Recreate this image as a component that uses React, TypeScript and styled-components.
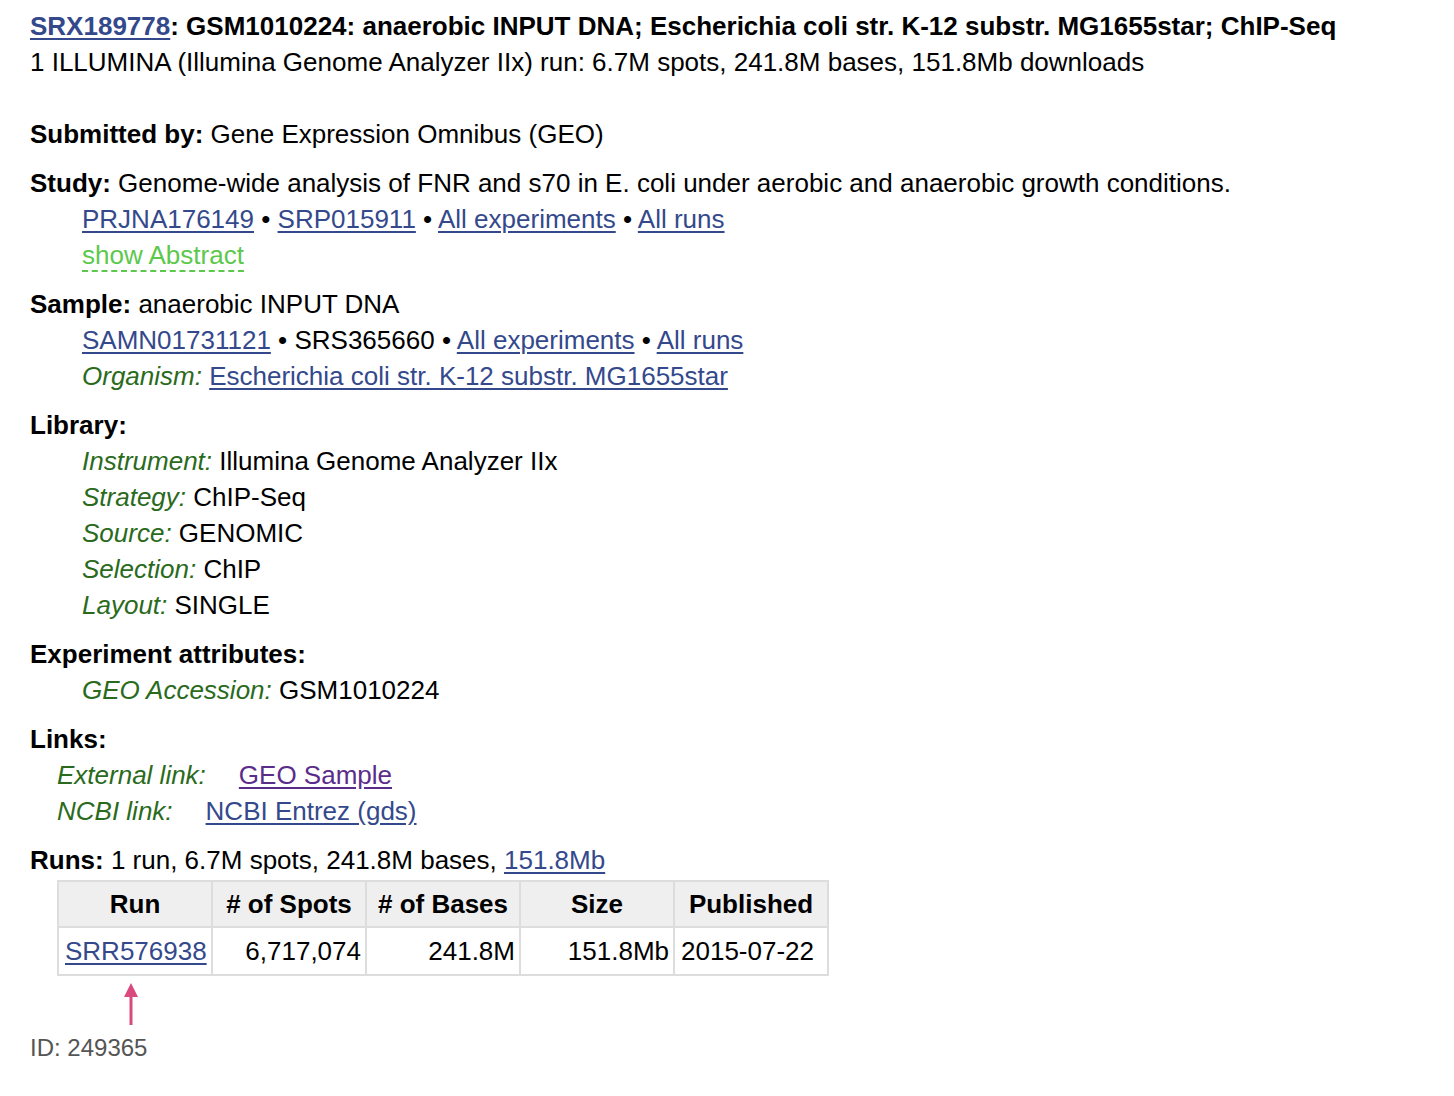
import styled, { createGlobalStyle } from 'styled-components';

const GlobalStyle = createGlobalStyle`
	body {
		margin: 0;
		background: #fff;
		color: #000;
		font-family: "Liberation Sans", Arial, Helvetica, sans-serif;
		font-size: 26px;
		line-height: 36px;
	}
`;

const Page = styled.div`
	padding: 8px 30px 30px 30px;
`;

const Title = styled.div`
	font-weight: bold;
`;

const Summary = styled.div`
	margin-bottom: 36px;
`;

const Block = styled.div`
	margin-bottom: 13px;
`;

const Label = styled.b``;

const Indent = styled.div<{ $pad?: number }>`
	padding-left: ${(p) => p.$pad ?? 52}px;
`;

const Link = styled.a<{ $visited?: boolean }>`
	color: ${(p) => (p.$visited ? '#5b2d8b' : '#34498c')};
	text-decoration: underline;
	text-underline-offset: 3px;
	cursor: pointer;
`;

const Toggle = styled.span`
	color: #5cc84c;
	border-bottom: 2px dashed #5cc84c;
	cursor: pointer;
`;

const Field = styled.i`
	color: #2a6a1c;
`;

const LinkLabel = styled(Field)`
	margin-right: 33px;
`;

const RunTable = styled.table`
	border-collapse: collapse;
	margin-left: 27px;
	margin-top: 2px;
	table-layout: fixed;
	border: 2px solid #ddd;
`;

const HeadCell = styled.th`
	width: 144px;
	height: 44px;
	padding: 0 4px;
	background: #efefef;
	border: 2px solid #ddd;
	font-weight: bold;
	text-align: center;
	white-space: nowrap;
`;

const Cell = styled.td<{ $align?: 'left' | 'right' }>`
	height: 46px;
	padding: 0 4px 0 6px;
	border: 2px solid #ddd;
	text-align: ${(p) => p.$align ?? 'right'};
	white-space: nowrap;
`;

const Pointer = styled.svg`
	display: block;
	margin-left: 92px;
	margin-top: 6px;
`;

const RecordId = styled.div`
	padding-top: 4px;
	color: #555;
	font-size: 24px;
`;

const Sep = () => <> &bull; </>;

export default function App() {
	return (
		<>
			<GlobalStyle />
			<Page>
				<Title>
					<Link>SRX189778</Link>: GSM1010224: anaerobic INPUT DNA; Escherichia coli str. K-12 substr.
					MG1655star; ChIP-Seq
				</Title>
				<Summary>
					1 ILLUMINA (Illumina Genome Analyzer IIx) run: 6.7M spots, 241.8M bases, 151.8Mb downloads
				</Summary>

				<Block>
					<Label>Submitted by:</Label> Gene Expression Omnibus (GEO)
				</Block>

				<Block>
					<Label>Study:</Label> Genome-wide analysis of FNR and s70 in E. coli under aerobic and anaerobic
					growth conditions.
					<Indent>
						<Link>PRJNA176149</Link>
						<Sep />
						<Link>SRP015911</Link>
						<Sep />
						<Link>All experiments</Link>
						<Sep />
						<Link>All runs</Link>
					</Indent>
					<Indent>
						<Toggle>show Abstract</Toggle>
					</Indent>
				</Block>

				<Block>
					<Label>Sample:</Label> anaerobic INPUT DNA
					<Indent>
						<Link>SAMN01731121</Link>
						<Sep />
						SRS365660
						<Sep />
						<Link>All experiments</Link>
						<Sep />
						<Link>All runs</Link>
					</Indent>
					<Indent>
						<Field>Organism:</Field> <Link>Escherichia coli str. K-12 substr. MG1655star</Link>
					</Indent>
				</Block>

				<Block>
					<Label>Library:</Label>
					<Indent>
						<Field>Instrument:</Field> Illumina Genome Analyzer IIx
					</Indent>
					<Indent>
						<Field>Strategy:</Field> ChIP-Seq
					</Indent>
					<Indent>
						<Field>Source:</Field> GENOMIC
					</Indent>
					<Indent>
						<Field>Selection:</Field> ChIP
					</Indent>
					<Indent>
						<Field>Layout:</Field> SINGLE
					</Indent>
				</Block>

				<Block>
					<Label>Experiment attributes:</Label>
					<Indent>
						<Field>GEO Accession:</Field> GSM1010224
					</Indent>
				</Block>

				<Block>
					<Label>Links:</Label>
					<Indent $pad={27}>
						<LinkLabel>External link:</LinkLabel>
						<Link $visited>GEO Sample</Link>
					</Indent>
					<Indent $pad={27}>
						<LinkLabel>NCBI link:</LinkLabel>
						<Link>NCBI Entrez (gds)</Link>
					</Indent>
				</Block>

				<div>
					<Label>Runs:</Label> 1 run, 6.7M spots, 241.8M bases, <Link>151.8Mb</Link>
				</div>
				<RunTable>
					<thead>
						<tr>
							<HeadCell>Run</HeadCell>
							<HeadCell># of Spots</HeadCell>
							<HeadCell># of Bases</HeadCell>
							<HeadCell>Size</HeadCell>
							<HeadCell>Published</HeadCell>
						</tr>
					</thead>
					<tbody>
						<tr>
							<Cell $align="left">
								<Link>SRR576938</Link>
							</Cell>
							<Cell>6,717,074</Cell>
							<Cell>241.8M</Cell>
							<Cell>151.8Mb</Cell>
							<Cell $align="left">2015-07-22</Cell>
						</tr>
					</tbody>
				</RunTable>
				<Pointer width="18" height="44" viewBox="0 0 18 44">
					<polygon points="9,1 2,15 16,15" fill="#d94a7f" />
					<line x1="9" y1="13" x2="9" y2="43" stroke="#d94a7f" strokeWidth="3" />
				</Pointer>
				<RecordId>ID: 249365</RecordId>
			</Page>
		</>
	);
}
